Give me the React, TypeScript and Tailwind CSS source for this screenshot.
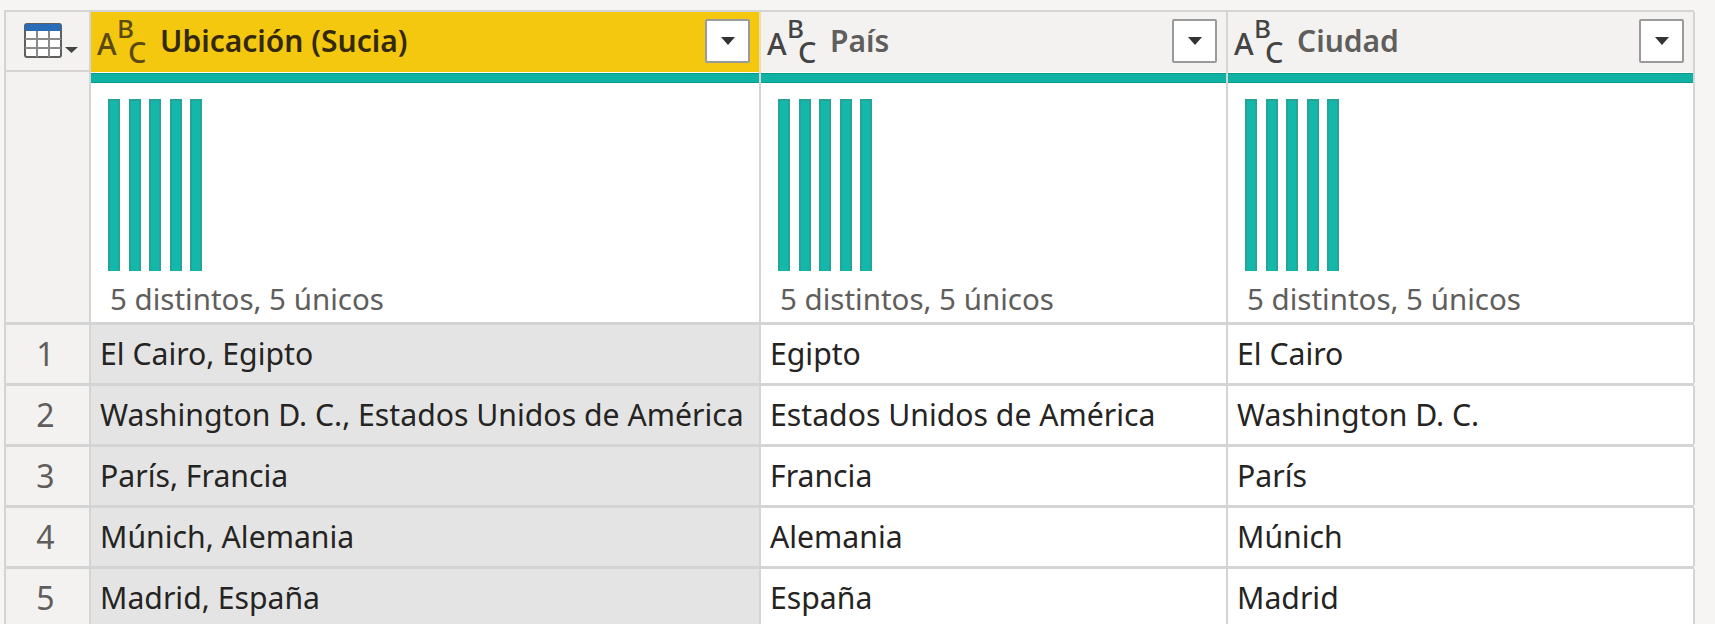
import React from 'react';

const rows = [
    ['El Cairo, Egipto', 'Egipto', 'El Cairo'],
    ['Washington D. C., Estados Unidos de América', 'Estados Unidos de América', 'Washington D. C.'],
    ['París, Francia', 'Francia', 'París'],
    ['Múnich, Alemania', 'Alemania', 'Múnich'],
    ['Madrid, España', 'España', 'Madrid'],
];

const gridCols = 'grid grid-cols-[85px_670px_467px_467px]';

const AbcIcon = ({ color }: { color: string }) => (
    <svg width="52" height="48" viewBox="0 0 52 48" className="shrink-0 overflow-visible">
        <g fill={color} fontFamily="'Noto Sans', sans-serif" fontWeight="500">
            <text x="0" y="37" fontSize="30">A</text>
            <text x="20" y="20" fontSize="26">B</text>
            <text x="31" y="45" fontSize="29">C</text>
        </g>
    </svg>
);

const TableIcon = () => (
    <svg width="56" height="36" viewBox="0 0 56 36">
        <rect x="1" y="1" width="36" height="33" rx="2" fill="#fff" stroke="#5f5f5f" strokeWidth="2" />
        <rect x="1" y="1" width="36" height="7" fill="#2b6cb8" />
        <path d="M13 8v26M25 8v26M1 16h36M1 25h36" stroke="#8a8a8a" strokeWidth="2" fill="none" />
        <path d="M41 24h13l-6.5 6z" fill="#444" />
    </svg>
);

const FilterButton = () => (
    <button className="w-[45px] h-[44px] shrink-0 mb-[2px] bg-white border-2 border-[#9a9a9a] rounded-[2px] flex items-center justify-center">
        <svg width="16" height="10" viewBox="0 0 16 10">
            <path d="M1 1h14L8 9z" fill="#333" />
        </svg>
    </button>
);

const ColumnHeader = ({ name, active }: { name: string; active?: boolean }) => (
    <div className={`h-[60px] flex items-center pl-[6px] pr-[9px] border-r-2 ${active ? 'bg-[#f4c80f] border-[#eadfae]' : 'bg-[#f3f2f1] border-[#d4d4d4]'}`}>
        <AbcIcon color={active ? '#5a4a12' : '#444444'} />
        <span className={`ml-[11px] mb-[4px] text-[30px] font-semibold flex-1 ${active ? 'text-[#33290a]' : 'text-[#605e5c]'}`}>{name}</span>
        <FilterButton />
    </div>
);

const Profile = () => (
    <div className="h-[250px] bg-white border-r-2 border-[#d4d4d4] flex flex-col">
        <div className="h-[10px] mt-[1px] bg-[#10b3a3] border-y border-[#0a9a8c]" />
        <div className="flex gap-[8.5px] pl-[17px] pt-[16px]">
            {[0, 1, 2, 3, 4].map(i => (
                <div key={i} className="w-[12px] h-[172px] bg-[#14b8aa] border-x-2 border-t-2 border-[#25a497]" />
            ))}
        </div>
        <div className="pl-[19px] mt-[10px] text-[29.5px] leading-[36px] text-[#605e5c]">5 distintos, 5 únicos</div>
    </div>
);

export default function App() {
    return (
        <div className="h-[624px] overflow-hidden bg-[#f6f5f4] pt-[10px] pl-[4px] font-['Noto_Sans',sans-serif]">
            <div className="w-[1690px] border-t-2 border-l-2 border-[#d4d4d4]">
                <div className={gridCols}>
                    <div className="h-[60px] bg-[#f3f2f1] border-r-2 border-b-2 border-[#d4d4d4] flex items-center pl-[18px]">
                        <TableIcon />
                    </div>
                    <ColumnHeader name="Ubicación (Sucia)" active />
                    <ColumnHeader name="País" />
                    <ColumnHeader name="Ciudad" />
                </div>
                <div className={gridCols}>
                    <div className="h-[250px] bg-[#f3f2f1] border-r-2 border-[#d4d4d4]" />
                    <Profile />
                    <Profile />
                    <Profile />
                </div>
                {rows.map((row, i) => (
                    <div key={i} className={`${gridCols} h-[61px] border-t-[3px] border-[#d4d4d4] text-[30.2px] text-[#252423]`}>
                        <div className="bg-[#f3f2f1] border-r-2 border-[#d4d4d4] flex items-center justify-center pr-[4px] text-[32px] text-[#605e5c]">{i + 1}</div>
                        {row.map((cell, j) => (
                            <div key={j} className={`flex items-center pl-[9px] whitespace-nowrap border-r-2 border-[#d4d4d4] ${j === 0 ? 'bg-[#e4e4e4]' : 'bg-white'}`}>{cell}</div>
                        ))}
                    </div>
                ))}
            </div>
        </div>
    );
}
